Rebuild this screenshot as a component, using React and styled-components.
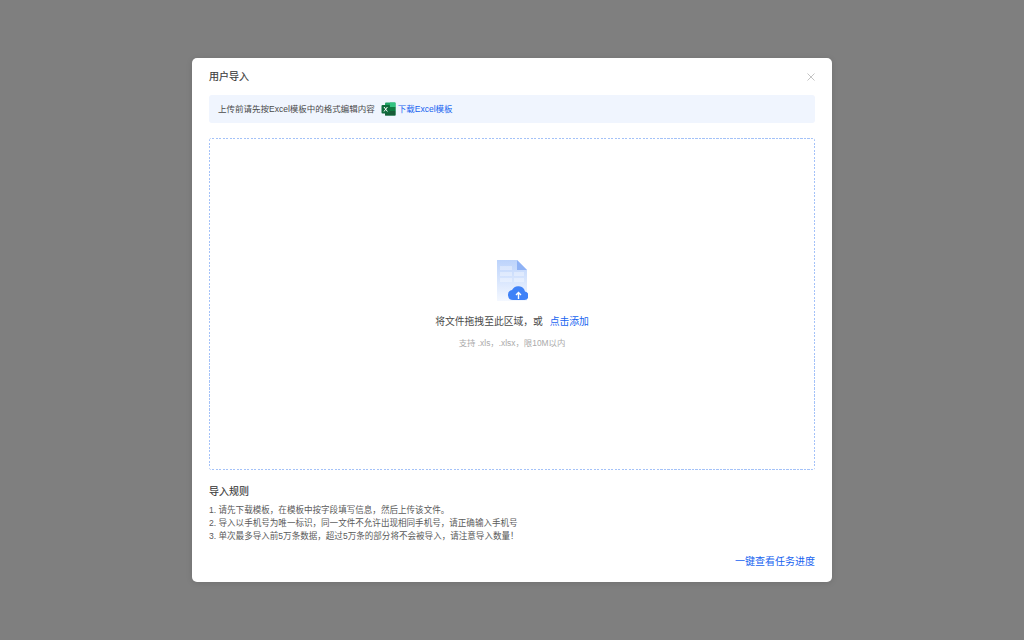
import React from 'react'
import styled, { createGlobalStyle } from 'styled-components'

const Global = createGlobalStyle`
    html, body {
        margin: 0;
        height: 100%;
        background: #7f7f7f;
        font-family: "Liberation Sans", "Noto Sans CJK SC", sans-serif;
    }
    * {
        box-sizing: border-box;
    }
`
const Overlay = styled.div`
    width: 1024px;
    height: 640px;
    padding-top: 58px;
    display: flex;
    justify-content: center;
    align-items: flex-start;
    background: #7f7f7f;
`
const Modal = styled.div`
    width: 640px;
    height: 524px;
    padding: 0 17px;
    background: #fff;
    border-radius: 5px;
    box-shadow: 0 1px 6px rgba(0, 0, 0, 0.12);
    display: flex;
    flex-direction: column;
`
const Header = styled.div`
    height: 37px;
    display: flex;
    justify-content: space-between;
    align-items: center;
`
const Title = styled.div`
    color: #3a3a3a;
    font-size: 10px;
    line-height: 14px;
    -webkit-text-stroke: 0.15px #3a3a3a;
`
const Close = styled.button`
    width: 10px;
    height: 10px;
    margin-right: -1px;
    padding: 0;
    border: 0;
    background: none;
    display: flex;
`
const Notice = styled.div`
    height: 28px;
    padding: 0 9px 2px;
    display: flex;
    align-items: center;
    background: #f0f5fe;
    border-radius: 3px;
    color: #4a4a4a;
    font-size: 8.5px;
`
const NoticeLink = styled.a`
    margin-left: 6px;
    display: flex;
    align-items: center;
    gap: 2px;
    color: #1763f0;

    svg {
        margin-top: 2px;
    }
`
const DropZone = styled.div`
    height: 332px;
    margin-top: 15px;
    padding-top: 121px;
    border-radius: 3px;
    display: flex;
    flex-direction: column;
    align-items: center;
    background:
        repeating-linear-gradient(90deg, #a4c2f8 0 2px, transparent 2px 3.5px) top / 100% 1px no-repeat,
        repeating-linear-gradient(90deg, #a4c2f8 0 2px, transparent 2px 3.5px) bottom / 100% 1px no-repeat,
        repeating-linear-gradient(0deg, #a4c2f8 0 2px, transparent 2px 3.5px) left / 1px 100% no-repeat,
        repeating-linear-gradient(0deg, #a4c2f8 0 2px, transparent 2px 3.5px) right / 1px 100% no-repeat;
`
const DropText = styled.div`
    margin-top: 12px;
    color: #4a4a4a;
    font-size: 9.8px;
    line-height: 14px;
`
const DropLink = styled.span`
    margin-left: 4px;
    color: #1763f0;
`
const DropHint = styled.div`
    margin-top: 8px;
    color: #aaa;
    font-size: 8.4px;
    line-height: 12px;
`
const Rules = styled.div`
    margin-top: 15px;
`
const RulesTitle = styled.div`
    color: #3a3a3a;
    font-size: 10px;
    line-height: 14px;
    margin-bottom: 5px;
    -webkit-text-stroke: 0.15px #3a3a3a;
`
const RuleLine = styled.div`
    color: #5a5a5a;
    font-size: 8.55px;
    line-height: 13px;
`
const Footer = styled.div`
    margin-top: 12px;
    display: flex;
    justify-content: flex-end;
`
const FooterLink = styled.a`
    color: #1763f0;
    font-size: 10px;
    line-height: 14px;
`

const CloseIcon = () => (
    <svg width="10" height="10" viewBox="0 0 10 10">
        <path d="M1.5 1.5l7 7M8.5 1.5l-7 7" stroke="#c4c4c4" strokeWidth="1" fill="none" />
    </svg>
)

const ExcelIcon = () => (
    <svg width="15" height="14" viewBox="0 0 15 14">
        <rect x="4" y="0.5" width="10.5" height="13" rx="1" fill="#21a366" />
        <rect x="9" y="0.5" width="5.5" height="4.5" fill="#33c481" />
        <rect x="4" y="9" width="10.5" height="4.5" fill="#185c37" />
        <rect x="9" y="5" width="5.5" height="4" fill="#107c41" />
        <rect x="0.5" y="3" width="8.5" height="8.5" rx="1" fill="#0f6b3c" />
        <path d="M3 5l3.4 4.5M6.4 5L3 9.5" stroke="#fff" strokeWidth="1" fill="none" />
    </svg>
)

const FileIcon = () => (
    <svg width="32" height="44" viewBox="0 0 32 44">
        <defs>
            <linearGradient id="sheet" x1="0" y1="0" x2="0" y2="1">
                <stop offset="0" stopColor="#bcd3fb" />
                <stop offset="1" stopColor="#f4f8ff" />
            </linearGradient>
        </defs>
        <path d="M1 1h20l10 10v31H1z" fill="url(#sheet)" />
        <path d="M21 1l10 10H21z" fill="#8fb2f5" />
        <path d="M4 7h12v4H4zM18 13h10v4H18zM4 13h12v4H4zM4 19h12v4H4zM18 19h10v4H18z" fill="#fff" opacity="0.35" />
        <path d="M17 41a5 5 0 0 1-1-9.900a7 7 0 0 1 13 1.400a4.300 4.300 0 0 1-.5 8.500z" fill="#3f82f7" />
        <path d="M22.500 40v-6M20 36l2.500-2.500L25 36" stroke="#fff" strokeWidth="1.400" fill="none" />
    </svg>
)

const rules = [
    '1. 请先下载模板，在模板中按字段填写信息，然后上传该文件。',
    '2. 导入以手机号为唯一标识，同一文件不允许出现相同手机号，请正确输入手机号',
    '3. 单次最多导入前5万条数据，超过5万条的部分将不会被导入，请注意导入数量！',
]

const App = () => {
    return (
        <Overlay>
            <Global />
            <Modal>
                <Header>
                    <Title>用户导入</Title>
                    <Close><CloseIcon /></Close>
                </Header>
                <Notice>
                    上传前请先按Excel模板中的格式编辑内容
                    <NoticeLink><ExcelIcon />下载Excel模板</NoticeLink>
                </Notice>
                <DropZone>
                    <FileIcon />
                    <DropText>将文件拖拽至此区域，或<DropLink> 点击添加</DropLink></DropText>
                    <DropHint>支持 .xls，.xlsx，限10M以内</DropHint>
                </DropZone>
                <Rules>
                    <RulesTitle>导入规则</RulesTitle>
                    {rules.map((r) => <RuleLine key={r}>{r}</RuleLine>)}
                </Rules>
                <Footer>
                    <FooterLink>一键查看任务进度</FooterLink>
                </Footer>
            </Modal>
        </Overlay>
    )
}

export default App
